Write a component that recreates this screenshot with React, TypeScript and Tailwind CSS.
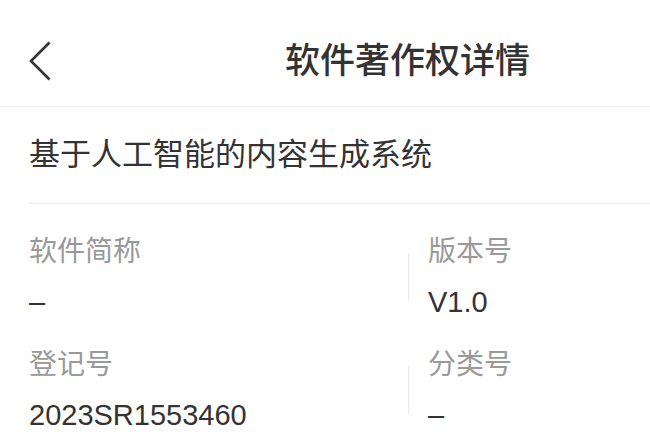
import React from "react";

const fields = [
  { label: "软件简称", value: "–" },
  { label: "版本号", value: "V1.0" },
  { label: "登记号", value: "2023SR1553460" },
  { label: "分类号", value: "–" },
];

const BackIcon = () => (
  <svg width="22" height="40" viewBox="0 0 22 40" fill="none">
    <path
      d="M20.5 1.5 L2 20 L20.5 38.5"
      stroke="#333333"
      strokeWidth="2.6"
      strokeLinejoin="miter"
    />
  </svg>
);

const Cell = ({ label, value, right }: { label: string; value: string; right?: boolean }) => (
  <div className="flex items-center">
    {right && <div className="w-px h-12 bg-[#e8e8e8] self-center" />}
    <div className={`flex flex-col gap-[10px] ${right ? "ml-[19px]" : ""}`}>
      <div className="text-[28px] leading-[40px] text-[#999999]">{label}</div>
      <div className="text-[29px] leading-[40px] text-[#333333]">{value}</div>
    </div>
  </div>
);

export default function App() {
  return (
    <div
      className="w-[650px] h-[444px] bg-white overflow-hidden"
      style={{ fontFamily: '"Liberation Sans", "Noto Sans CJK SC", sans-serif' }}
    >
      <div className="h-[107px] pt-[15px] border-b border-[#eeeeee] flex items-center pl-[29px]">
        <BackIcon />
        <div className="ml-[234px] text-[35px] leading-[44px] font-medium text-[#333333]">
          软件著作权详情
        </div>
      </div>

      <div className="ml-[29px] h-[97px] border-b border-[#eeeeee] flex items-center">
        <div className="text-[31px] leading-[40px] text-[#333333]">基于人工智能的内容生成系统</div>
      </div>

      <div className="pl-[29px] pt-[28px] grid grid-cols-[379px_1fr] gap-y-[23px]">
        {fields.map((f, i) => (
          <Cell key={f.label} label={f.label} value={f.value} right={i % 2 === 1} />
        ))}
      </div>
    </div>
  );
}
